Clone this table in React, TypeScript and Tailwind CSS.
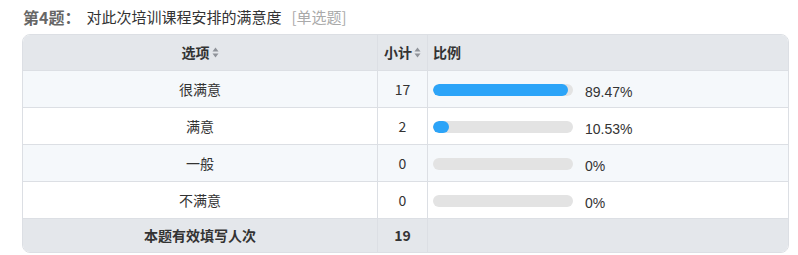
import React from "react";

type Row = { label: string; count: number; pct: number; text: string };

const rows: Row[] = [
  { label: "很满意", count: 17, pct: 89.47, text: "89.47%" },
  { label: "满意", count: 2, pct: 10.53, text: "10.53%" },
  { label: "一般", count: 0, pct: 0, text: "0%" },
  { label: "不满意", count: 0, pct: 0, text: "0%" },
];

function SortIcon() {
  return (
    <svg width="7" height="11" viewBox="0 0 7 11" className="ml-[2px] inline-block">
      <path d="M3.5 0.5 L6.5 4.5 L0.5 4.5 Z" fill="#8f9399" />
      <path d="M3.5 10.5 L6.5 6.5 L0.5 6.5 Z" fill="#8f9399" />
    </svg>
  );
}

export default function App() {
  const font = { fontFamily: '"Microsoft YaHei", "Noto Sans CJK SC", sans-serif' };
  return (
    <div className="w-[798px] h-[255px] bg-white" style={font}>
      <div className="pl-[23px] pt-[6px] h-[34px] flex items-start text-[15px] leading-[22px]">
        <span className="font-bold text-[16px] text-[#666]">第4题：</span>
        <span className="ml-[6px] text-[15px] text-[#333]">对此次培训课程安排的满意度</span>
        <span className="ml-[10px] text-[15px] text-[#aaa]">[单选题]</span>
      </div>
      <div className="ml-[22px] w-[767px] border border-[#dcdfe4] rounded-[8px] overflow-hidden text-[14px] text-[#333]">
        <div className="grid grid-cols-[355px_50px_1fr] h-[36px] bg-[#e4e7eb] font-bold border-b border-[#dcdfe4]">
          <div className="flex items-center justify-center border-r border-[#dcdfe4]">
            选项
            <SortIcon />
          </div>
          <div className="flex items-center justify-center border-r border-[#dcdfe4]">
            小计
            <SortIcon />
          </div>
          <div className="flex items-center pl-[5px]">比例</div>
        </div>
        {rows.map((r, i) => (
          <div
            key={r.label}
            className={`grid grid-cols-[355px_50px_1fr] h-[37px] border-b border-[#dcdfe4] ${
              i % 2 === 0 ? "bg-[#f5f8fb]" : "bg-white"
            }`}
          >
            <div className="flex items-center justify-center border-r border-[#dcdfe4]">{r.label}</div>
            <div className="flex items-center justify-center border-r border-[#dcdfe4]">{r.count}</div>
            <div className="flex items-center pl-[5px] pt-[2px]">
              <div className="w-[140px] h-[12px] rounded-full bg-[#e3e3e3] overflow-hidden">
                <div
                  className="h-full rounded-full bg-[#2ca4f8]"
                  style={{ width: `${Math.min(140, r.pct * 1.51)}px` }}
                />
              </div>
              <span className="ml-[12px] pt-[4px] text-[14px]" style={{ fontFamily: 'Arial, "Liberation Sans", sans-serif' }}>
                {r.text}
              </span>
            </div>
          </div>
        ))}
        <div className="grid grid-cols-[355px_50px_1fr] h-[33px] bg-[#e4e7eb] font-bold">
          <div className="flex items-center justify-center border-r border-[#dcdfe4]">本题有效填写人次</div>
          <div className="flex items-center justify-center border-r border-[#dcdfe4]">19</div>
          <div />
        </div>
      </div>
    </div>
  );
}
